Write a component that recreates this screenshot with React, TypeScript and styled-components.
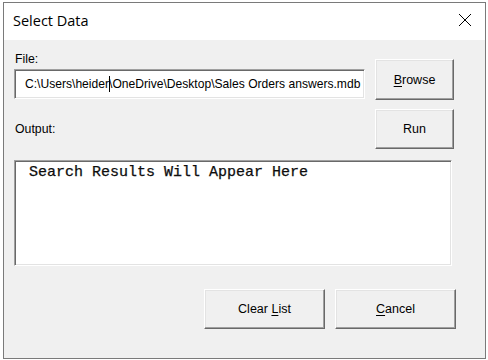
import styled, { createGlobalStyle } from "styled-components";

const GlobalStyle = createGlobalStyle`
  html, body {
    margin: 0;
    padding: 0;
    background: #ffffff;
  }
  #root {
    width: 488px;
    height: 360px;
    overflow: hidden;
  }
`

const Backdrop = styled.div`
  width: 488px;
  height: 360px;
  padding: 2px 0 0 3px;
  box-sizing: border-box;
  background: #ffffff;
`

const Window = styled.div`
  width: 483px;
  height: 357px;
  box-sizing: border-box;
  border: 1px solid #7a7a7a;
  background: #f0f0f0;
  display: flex;
  flex-direction: column;
`

const TitleBar = styled.div`
  height: 37px;
  flex-shrink: 0;
  background: #ffffff;
  display: flex;
  align-items: center;
  justify-content: space-between;
  padding: 0 13px 0 9px;
`

const Title = styled.span`
  font-family: "Open Sans", "Noto Sans", sans-serif;
  font-size: 14.5px;
  color: #000;
  margin-top: -2px;
`

const CloseIcon = styled.svg`
  width: 14px;
  height: 14px;
  margin-top: -3px;
`

const Client = styled.div`
  flex: 1;
  padding: 0 0 0 10px;
  font-family: "Liberation Sans", Arial, sans-serif;
  font-size: 12.3px;
  color: #000;
`

const Row = styled.div<{ $top: number; $center?: boolean }>`
  display: flex;
  align-items: ${(p) => (p.$center ? "center" : "flex-start")};
  gap: 10px;
  margin-top: ${(p) => p.$top}px;
`

const Field = styled.div`
  width: 351px;
  display: flex;
  flex-direction: column;
  gap: 3px;
`

const Label = styled.div`
  height: 14px;
  line-height: 14px;
  padding-left: 1px;
`

const Sunken = styled.div`
  box-sizing: border-box;
  background: #ffffff;
  border: 1px solid;
  border-color: #a0a0a0 #ffffff #ffffff #a0a0a0;
  box-shadow: inset 1px 1px #696969, inset -1px -1px #e3e3e3;
`

const TextBox = styled(Sunken)`
  height: 30px;
  display: flex;
  align-items: center;
  padding-left: 10px;
  font-size: 12.1px;
  white-space: nowrap;
  overflow: hidden;
`

const Caret = styled.span`
  display: inline-block;
  width: 1px;
  height: 16px;
  background: #000;
  vertical-align: -4px;
  margin: 0 -1px 0 0;
`

const Results = styled(Sunken)`
  width: 438px;
  height: 106px;
  margin-top: 11px;
  padding: 5px 0 0 14px;
  font-family: "Liberation Mono", "Courier New", monospace;
  font-size: 15px;
  line-height: 14px;
  -webkit-text-stroke: 0.25px #000;
  color: #111;
`

const Button = styled.button<{ $w: number; $h?: number }>`
  width: ${(p) => p.$w}px;
  height: ${(p) => p.$h ?? 40}px;
  flex-shrink: 0;
  box-sizing: border-box;
  background: #f0f0f0;
  border: 1px solid;
  border-color: #ffffff #696969 #696969 #ffffff;
  box-shadow: inset -1px -1px #a0a0a0, inset 1px 1px #e3e3e3;
  font-family: "Liberation Sans", Arial, sans-serif;
  font-size: 12.5px;
  color: #000;
  padding: 0;
  cursor: default;

  u {
    text-underline-offset: 2px;
  }
`

const Footer = styled.div`
  display: flex;
  gap: 10px;
  margin-top: 23px;
  padding-left: 190px;
`

export default function App() {
  return (
    <>
      <GlobalStyle />
      <Backdrop>
        <Window>
          <TitleBar>
            <Title>Select Data</Title>
            <CloseIcon viewBox="0 0 14 14">
              <path d="M1 1 L13 13 M13 1 L1 13" stroke="#000" strokeWidth="1" fill="none" />
            </CloseIcon>
          </TitleBar>
          <Client>
            <Row $top={12}>
              <Field>
                <Label>File:</Label>
                <TextBox>
                  C:\Users\heider<Caret />\OneDrive\Desktop\Sales Orders answers.mdb
                </TextBox>
              </Field>
              <Button $w={79} $h={41} style={{ marginTop: 7 }}>
                <u>B</u>rowse
              </Button>
            </Row>
            <Row $top={9} $center>
              <Field>
                <Label>Output:</Label>
              </Field>
              <Button $w={79}>Run</Button>
            </Row>
            <Results>Search Results Will Appear Here</Results>
            <Footer>
              <Button $w={121}>
                Clear <u>L</u>ist
              </Button>
              <Button $w={121}>
                <u>C</u>ancel
              </Button>
            </Footer>
          </Client>
        </Window>
      </Backdrop>
    </>
  )
}
